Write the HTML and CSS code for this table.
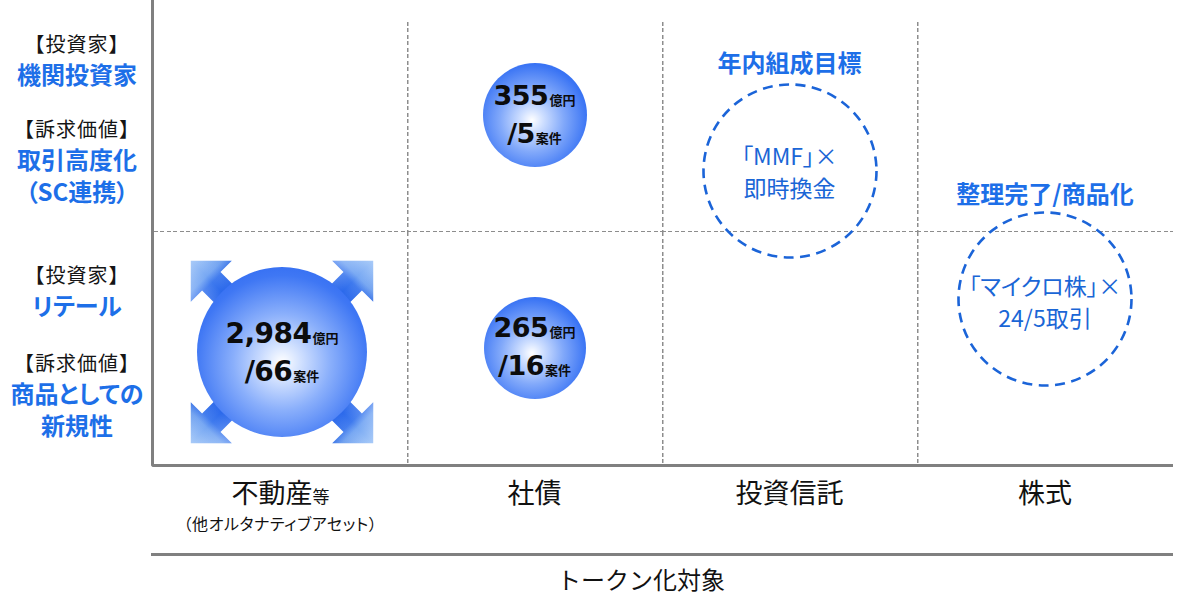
FILE: index.html
```html
<!DOCTYPE html>
<html lang="ja">
<head>
<meta charset="utf-8">
<title>トークン化対象</title>
<link rel="stylesheet" href="styles.css">
</head>
<body>
<div class="page">
  <div class="main">
    <aside class="ylabels">
      <div class="yhalf yhalf-top">
        <div class="grp">
          <div class="k">【投資家】</div>
          <div class="b">機関投資家</div>
        </div>
        <div class="grp">
          <div class="k">【訴求価値】</div>
          <div class="b">取引高度化</div>
          <div class="b">（SC連携）</div>
        </div>
      </div>
      <div class="yhalf yhalf-bottom">
        <div class="grp">
          <div class="k">【投資家】</div>
          <div class="b">リテール</div>
        </div>
        <div class="grp">
          <div class="k">【訴求価値】</div>
          <div class="b">商品としての</div>
          <div class="b">新規性</div>
        </div>
      </div>
    </aside>

    <div class="chart">
      <div class="cell r1 c1"></div>
      <div class="cell r1 c2 v">
        <div class="sphere sm s355">
          <div class="sl"><span class="num">355</span><span class="unit">億円</span></div>
          <div class="sl"><span class="num">/5</span><span class="unit">案件</span></div>
        </div>
      </div>
      <div class="cell r1 c3 v">
        <div class="goal">年内組成目標</div>
        <div class="dcircle">
          <svg class="ring" viewBox="0 0 176 176" width="176" height="176" aria-hidden="true">
            <circle cx="88" cy="88" r="86.5" fill="none" stroke="#1b64d8" stroke-width="2.6" stroke-dasharray="10 6.5"/>
          </svg>
          <div class="dl">「MMF」×</div>
          <div class="dl">即時換金</div>
        </div>
      </div>
      <div class="cell r1 c4 v">
        <div class="goal">整理完了/商品化</div>
      </div>

      <div class="cell r2 c1">
        <div class="bigwrap">
          <svg class="arrows" viewBox="0 0 200 200" width="200" height="200" aria-hidden="true">
            <defs>
              <linearGradient id="ag" gradientUnits="userSpaceOnUse" x1="0" y1="-129" x2="0" y2="-80">
                <stop offset="0" stop-color="#a9cbf8"/>
                <stop offset="0.45" stop-color="#76a7f3"/>
                <stop offset="0.62" stop-color="#3f7aee"/>
                <stop offset="1" stop-color="#2362ea"/>
              </linearGradient>
              <linearGradient id="as" gradientUnits="userSpaceOnUse" x1="-30" y1="0" x2="30" y2="0">
                <stop offset="0" stop-color="#ffffff" stop-opacity="0.28"/>
                <stop offset="0.5" stop-color="#ffffff" stop-opacity="0"/>
                <stop offset="1" stop-color="#0b3fb5" stop-opacity="0.14"/>
              </linearGradient>
              <path id="arw" d="M0,-129 L29,-100 L13,-100 L13,-55 L-13,-55 L-13,-100 L-29,-100 Z"/>
            </defs>
            <g transform="translate(100 100)">
              <g transform="rotate(-45)">
                <use href="#arw" fill="url(#ag)"/>
                <use href="#arw" fill="url(#as)"/>
              </g>
              <g transform="rotate(45)">
                <use href="#arw" fill="url(#ag)"/>
                <use href="#arw" fill="url(#as)"/>
              </g>
              <g transform="rotate(135)">
                <use href="#arw" fill="url(#ag)"/>
                <use href="#arw" fill="url(#as)"/>
              </g>
              <g transform="rotate(-135)">
                <use href="#arw" fill="url(#ag)"/>
                <use href="#arw" fill="url(#as)"/>
              </g>
            </g>
          </svg>
          <div class="sphere lg">
            <div class="sl"><span class="num">2,984</span><span class="unit">億円</span></div>
            <div class="sl"><span class="num">/66</span><span class="unit">案件</span></div>
          </div>
        </div>
      </div>
      <div class="cell r2 c2 v">
        <div class="sphere sm s265">
          <div class="sl"><span class="num">265</span><span class="unit">億円</span></div>
          <div class="sl"><span class="num">/16</span><span class="unit">案件</span></div>
        </div>
      </div>
      <div class="cell r2 c3 v"></div>
      <div class="cell r2 c4 v">
        <div class="dcircle up">
          <svg class="ring" viewBox="0 0 176 176" width="176" height="176" aria-hidden="true">
            <circle cx="88" cy="88" r="86.5" fill="none" stroke="#1b64d8" stroke-width="2.6" stroke-dasharray="10 6.5"/>
          </svg>
          <div class="dl">「マイクロ株」×</div>
          <div class="dl">24/5取引</div>
        </div>
      </div>
    </div>
  </div>

  <div class="xaxis">
    <div class="xl">
      <div class="xmain">不動産<span class="xsmall">等</span></div>
      <div class="xsub">（他オルタナティブアセット）</div>
    </div>
    <div class="xl"><div class="xmain">社債</div></div>
    <div class="xl"><div class="xmain">投資信託</div></div>
    <div class="xl"><div class="xmain">株式</div></div>
  </div>
  <div class="xrule"></div>
  <div class="xtitle">トークン化対象</div>
</div>
</body>
</html>
```

FILE: styles.css
```css
* { box-sizing: border-box; }

html, body {
  margin: 0;
  padding: 0;
  background: #ffffff;
}

body {
  font-family: "Noto Sans CJK JP", "Noto Sans", sans-serif;
  color: #111111;
}

.page {
  width: 1200px;
  height: 603px;
  overflow: hidden;
}

.main {
  display: flex;
  height: 467px;
}

/* ---------- Y labels ---------- */
.ylabels {
  width: 151px;
  flex: none;
  display: flex;
  flex-direction: column;
  text-align: center;
  padding-left: 3px;
}

.yhalf {
  display: flex;
  flex-direction: column;
}

.yhalf-top {
  height: 232px;
  padding-top: 30px;
  gap: 25px;
}

.yhalf-bottom {
  padding-top: 29px;
  gap: 28px;
}

.grp {
  display: flex;
  flex-direction: column;
}

.k {
  font-size: 20px;
  line-height: 28px;
  color: #151515;
  letter-spacing: 1px;
  white-space: nowrap;
}

.b {
  font-size: 24px;
  line-height: 32px;
  font-weight: 700;
  color: #1d6fe8;
  font-feature-settings: "palt";
  white-space: nowrap;
}

/* ---------- Chart ---------- */
.chart {
  width: 1022px;
  flex: none;
  border-left: 3px solid #808080;
  border-bottom: 3px solid #808080;
  border-bottom-left-radius: 3px;
  padding-top: 22px;
  display: grid;
  grid-template-columns: 253px 255px 255px 256px;
  grid-template-rows: 210px 232px;
}

.cell {
  display: flex;
  flex-direction: column;
  align-items: center;
  min-width: 0;
  background-repeat: no-repeat;
}

.cell.r1 {
  background-image: repeating-linear-gradient(to right, #8d8d8d 0 4px, transparent 4px 6.5px);
  background-size: 100% 1.5px;
  background-position: left bottom;
}

.cell.v {
  background-image: repeating-linear-gradient(to bottom, #8d8d8d 0 4px, transparent 4px 6.5px);
  background-size: 1.5px 100%;
  background-position: left top;
}

.cell.r1.v {
  background-image:
    repeating-linear-gradient(to bottom, #8d8d8d 0 4px, transparent 4px 6.5px),
    repeating-linear-gradient(to right, #8d8d8d 0 4px, transparent 4px 6.5px);
  background-size: 1.5px 100%, 100% 1.5px;
  background-position: left top, left bottom;
}

.r1.c2 { padding-top: 41px; }
.r1.c3 { padding-top: 27px; gap: 8px; }
.r1.c4 { padding-top: 158px; }
.r2.c1 { justify-content: center; padding-top: 8px; padding-left: 3px; }
.r2.c2 { justify-content: center; }

.goal {
  font-size: 24px;
  line-height: 26px;
  font-weight: 700;
  color: #1d6fe8;
  font-feature-settings: "palt";
  white-space: nowrap;
}

/* ---------- Spheres ---------- */
.sphere {
  border-radius: 50%;
  display: flex;
  flex-direction: column;
  align-items: center;
  justify-content: center;
  color: #0c0c0c;
  background: radial-gradient(circle at 47% 55%, #ffffff 0%, #d0e0ff 14%, #82a9fa 40%, #3a74f4 70%, #2060f0 100%);
}

.sphere.sm {
  width: 104px;
  height: 104px;
  padding-top: 4px;
}

.sphere.s265 {
  width: 102px;
  height: 102px;
  padding-top: 2px;
}

.sphere.lg {
  position: relative;
  z-index: 1;
  width: 170px;
  height: 170px;
  padding-top: 6px;
  background: radial-gradient(circle at 50% 56%, #ffffff 0%, #d6e4ff 13%, #8aaffb 38%, #3f77f4 68%, #1f5eef 100%);
}

.sl {
  display: flex;
  align-items: baseline;
  line-height: 34px;
  white-space: nowrap;
}

.num {
  font-family: "DejaVu Sans", "Noto Sans", sans-serif;
  font-weight: 700;
  font-size: 27px;
  letter-spacing: -0.5px;
}

.lg .num {
  font-size: 28px;
}

.unit {
  font-family: "Noto Sans CJK JP", sans-serif;
  font-weight: 700;
  font-size: 13px;
  margin-left: 1px;
}

.bigwrap {
  position: relative;
  width: 170px;
  height: 170px;
}

.arrows {
  position: absolute;
  left: -15px;
  top: -15px;
  z-index: 0;
  overflow: visible;
}

/* ---------- Dashed circles ---------- */
.dcircle {
  position: relative;
  width: 176px;
  height: 176px;
  flex: none;
  display: flex;
  flex-direction: column;
  align-items: center;
  justify-content: center;
  color: #1a66d6;
}

.dcircle.up {
  margin-top: -21px;
  padding-top: 4px;
}

.ring {
  position: absolute;
  left: 0;
  top: 0;
}

.dl {
  position: relative;
  font-size: 23px;
  line-height: 32px;
  font-feature-settings: "palt";
  white-space: nowrap;
}

/* ---------- X axis ---------- */
.xaxis {
  margin-left: 154px;
  width: 1019px;
  display: grid;
  grid-template-columns: 253px 255px 255px 256px;
}

.xl {
  padding-top: 8px;
  text-align: center;
}

.xmain {
  font-size: 27px;
  line-height: 34px;
  white-space: nowrap;
}

.xsmall {
  font-size: 17px;
}

.xsub {
  font-size: 16px;
  line-height: 20px;
  font-feature-settings: "palt";
  letter-spacing: 0.6px;
  white-space: nowrap;
}

.xrule {
  margin-left: 151px;
  width: 1022px;
  height: 3px;
  margin-top: 20px;
  background: #808080;
}

.xtitle {
  margin-left: 151px;
  width: 1022px;
  padding-right: 42px;
  margin-top: 7px;
  text-align: center;
  font-size: 24px;
  line-height: 32px;
  white-space: nowrap;
}
```
